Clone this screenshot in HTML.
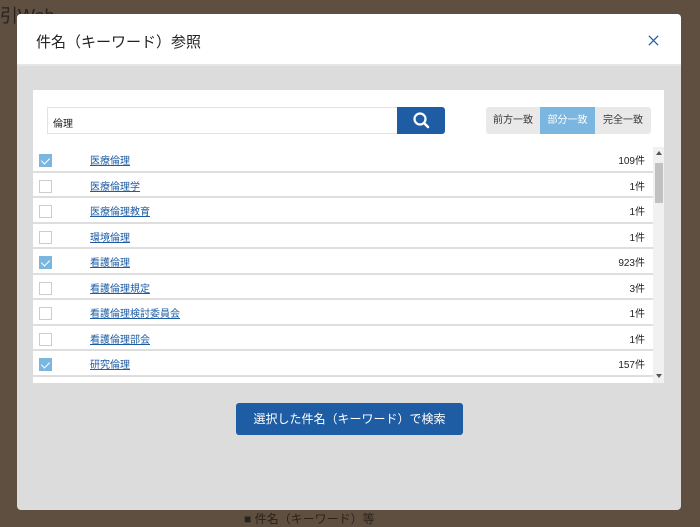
<!DOCTYPE html>
<html><head><meta charset="utf-8"><style>
*{box-sizing:border-box;margin:0;padding:0}
body{width:700px;height:526px;overflow:hidden;background:#5e4f41;font-family:"Liberation Sans","Noto Sans CJK JP",sans-serif;position:relative}
.bgt{position:absolute;color:#2a231c;font-size:13px}
.modal{position:absolute;left:17px;top:14px;width:664px;height:496px;background:#dcdcdc;border-radius:4px;overflow:hidden}
.hdr{height:52px;background:#fff;border-bottom:2px solid #e6e6e6;position:relative}
.hdr h1{position:absolute;left:19px;top:17px;font-size:15px;font-weight:normal;color:#222}
.x{position:absolute;left:630px;top:20px}
.panel{position:absolute;left:16px;top:76px;width:631px;height:293px;background:#fff}
.inp{position:absolute;left:14px;top:17px;width:351px;height:27px;border:1px solid #e3e3e3;border-right:none;font-size:10px;padding:7px 5px;color:#222}
.sb{position:absolute;left:364px;top:17px;width:48px;height:27px;background:#1e5ca3;border-radius:0 3px 3px 0}
.tg{position:absolute;top:17px;height:27px;font-size:10px;line-height:27px;text-align:center;background:#e9e9e9;color:#333}
.list{position:absolute;left:0;top:57px;width:620px;height:236px;overflow:hidden}
.row{height:25.5px;border-bottom:2px solid #dedede;position:relative}
.cb{position:absolute;left:6px;top:7px;width:13px;height:13px;border:1px solid #ccc;background:#fff}
.cb.on{background:#7bb6e0;border-color:#7bb6e0}
.cb.on:after{content:"";position:absolute;left:3px;top:1px;width:4px;height:7px;border:solid #fff;border-width:0 1.5px 1.5px 0;transform:rotate(45deg)}
.lk{position:absolute;left:57px;top:5px;font-size:10px;color:#1e5ca3;text-decoration:underline}
.ct{position:absolute;right:8px;top:5px;font-size:10px;color:#222}
.scr{position:absolute;left:620px;top:57px;width:11px;height:236px;background:#f1f1f1}
.btn{position:absolute;left:219px;top:389px;width:227px;height:32px;background:#1e5ca3;border-radius:3px;color:#fff;font-size:12px;text-align:center;line-height:32px}
</style></head><body>
<div class="bgt" style="left:0;top:2px;font-size:18px">引Web</div>
<div class="bgt" style="left:244px;top:510px;font-size:12px">■ 件名（キーワード）等</div>
<div class="modal">
<div class="hdr"><h1>件名（キーワード）参照</h1>
<svg class="x" width="13" height="13" viewBox="0 0 14 14"><path d="M2 2L12 12M12 2L2 12" stroke="#1e5ca3" stroke-width="1.3"/></svg></div>
<div class="panel">
<div class="inp">倫理</div>
<div class="sb"><svg width="48" height="27" viewBox="0 0 48 27"><circle cx="23" cy="12" r="5.5" fill="none" stroke="#fff" stroke-width="2.2"/><path d="M27 16L31 20" stroke="#fff" stroke-width="2.5" stroke-linecap="round"/></svg></div>
<div class="tg" style="left:453px;width:54px;border-radius:3px 0 0 3px">前方一致</div>
<div class="tg" style="left:507px;width:55px;background:#7bb6e0;color:#fff">部分一致</div>
<div class="tg" style="left:562px;width:56px;border-radius:0 3px 3px 0">完全一致</div>
<div class="list">
<div class="row"><div class="cb on"></div><span class="lk">医療倫理</span><span class="ct">109件</span></div>
<div class="row"><div class="cb"></div><span class="lk">医療倫理学</span><span class="ct">1件</span></div>
<div class="row"><div class="cb"></div><span class="lk">医療倫理教育</span><span class="ct">1件</span></div>
<div class="row"><div class="cb"></div><span class="lk">環境倫理</span><span class="ct">1件</span></div>
<div class="row"><div class="cb on"></div><span class="lk">看護倫理</span><span class="ct">923件</span></div>
<div class="row"><div class="cb"></div><span class="lk">看護倫理規定</span><span class="ct">3件</span></div>
<div class="row"><div class="cb"></div><span class="lk">看護倫理検討委員会</span><span class="ct">1件</span></div>
<div class="row"><div class="cb"></div><span class="lk">看護倫理部会</span><span class="ct">1件</span></div>
<div class="row"><div class="cb on"></div><span class="lk">研究倫理</span><span class="ct">157件</span></div>
</div>
<div class="scr"><div style="position:absolute;left:2px;top:16px;width:8px;height:40px;background:#c1c1c1"></div>
<div style="position:absolute;left:3px;top:4px;border:3px solid transparent;border-bottom:4px solid #555;border-top:0"></div>
<div style="position:absolute;left:3px;bottom:5px;border:3px solid transparent;border-top:4px solid #555;border-bottom:0"></div></div>
</div>
<div class="btn">選択した件名（キーワード）で検索</div>
</div>
</body></html>
